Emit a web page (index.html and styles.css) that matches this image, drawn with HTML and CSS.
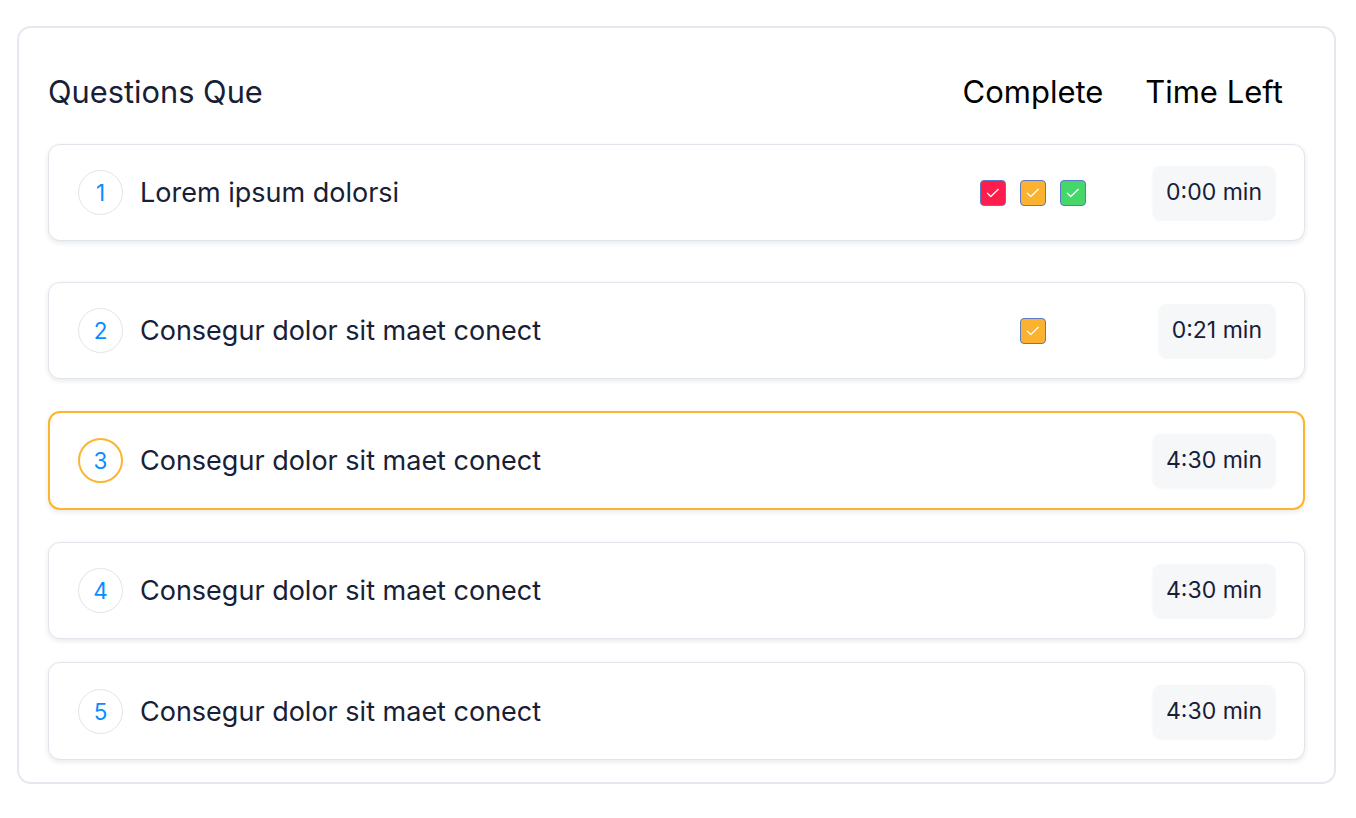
FILE: index.html
```html
<!DOCTYPE html>
<html lang="en">
<head>
<meta charset="utf-8">
<title>Questions Que</title>
<link rel="stylesheet" href="styles.css">
</head>
<body>
<div class="card">
  <div class="head">
    <div class="head-title">Questions Que</div>
    <div class="head-complete">Complete</div>
    <div class="head-time">Time Left</div>
  </div>
  <div class="list">
    <div class="row row-1">
      <div class="num">1</div>
      <div class="title">Lorem ipsum dolorsi</div>
      <div class="complete">
        <span class="chk red"><svg viewBox="0 0 26 26"><path d="M6.8 13.2l3.8 3.6 8.2-7.8"/></svg></span>
        <span class="chk orange"><svg viewBox="0 0 26 26"><path d="M6.8 13.2l3.8 3.6 8.2-7.8"/></svg></span>
        <span class="chk green"><svg viewBox="0 0 26 26"><path d="M6.8 13.2l3.8 3.6 8.2-7.8"/></svg></span>
      </div>
      <div class="time"><span class="badge">0:00 min</span></div>
    </div>
    <div class="row row-2">
      <div class="num">2</div>
      <div class="title">Consegur dolor sit maet conect</div>
      <div class="complete">
        <span class="chk orange"><svg viewBox="0 0 26 26"><path d="M6.8 13.2l3.8 3.6 8.2-7.8"/></svg></span>
      </div>
      <div class="time"><span class="badge">0:21 min</span></div>
    </div>
    <div class="row row-3 active">
      <div class="num">3</div>
      <div class="title">Consegur dolor sit maet conect</div>
      <div class="complete"></div>
      <div class="time"><span class="badge">4:30 min</span></div>
    </div>
    <div class="row row-4">
      <div class="num">4</div>
      <div class="title">Consegur dolor sit maet conect</div>
      <div class="complete"></div>
      <div class="time"><span class="badge">4:30 min</span></div>
    </div>
    <div class="row row-5">
      <div class="num">5</div>
      <div class="title">Consegur dolor sit maet conect</div>
      <div class="complete"></div>
      <div class="time"><span class="badge">4:30 min</span></div>
    </div>
  </div>
</div>
</body>
</html>
```

FILE: styles.css
```css
* { box-sizing: border-box; }
html, body { margin: 0; padding: 0; background: #ffffff; }
body {
  font-family: "Inter", "Noto Sans", sans-serif;
  color: #172036;
  padding: 26px 21px 0 17px;
}
.card {
  width: 1319px;
  height: 758px;
  border: 2px solid #e5e8ee;
  border-radius: 14px;
  padding: 0 29px 0 29px;
}
.head {
  display: flex;
  align-items: center;
  height: 116px;
  padding-top: 11px;
  padding-right: 11px;
}
.head-title {
  flex: 1;
  font-size: 30.8px;
  font-weight: 400;
  color: #172036;
}
.head-complete {
  width: 160px;
  text-align: center;
  font-size: 31px;
  font-weight: 400;
  color: #000;
}
.head-time {
  width: 160px;
  text-align: center;
  font-size: 31px;
  font-weight: 400;
  color: #000;
  margin-left: 21px;
}
.list { display: flex; flex-direction: column; }
.row {
  display: flex;
  align-items: center;
  height: 97px;
  border: 1.5px solid #e1e4ea;
  border-radius: 12px;
  padding: 0 29px 0 29px;
  box-shadow: 0 2px 5px rgba(30, 41, 59, 0.1);
  background: #fff;
}
.row-2 { margin-top: 41px; }
.row-3 { margin-top: 32px; height: 99px; }
.row-4 { margin-top: 32px; }
.row-5 { margin-top: 23px; height: 98px; }
.row.active { border: 2px solid #fbb52e; padding: 0 28px; }
.num {
  width: 45px;
  height: 45px;
  border-radius: 50%;
  border: 1.5px solid #e1e4ea;
  display: flex;
  align-items: center;
  justify-content: center;
  color: #0a8cff;
  font-size: 22.5px;
  flex: none;
}
.active .num { border: 2px solid #fbb52e; }
.title {
  flex: 1;
  margin-left: 17px;
  font-size: 27px;
  color: #172036;
  font-weight: 400;
}
.complete {
  width: 160px;
  display: flex;
  justify-content: center;
  gap: 14px;
}
.chk {
  width: 26px;
  height: 26px;
  border-radius: 4px;
  border: 1px solid #5b7bc9;
  display: block;
}
.chk svg { width: 24px; height: 24px; display: block; }
.chk path { fill: none; stroke: #fff; stroke-width: 1.3; stroke-linecap: round; stroke-linejoin: round; }
.chk.red { background: #ff1d4c; }
.chk.orange { background: #fbb230; }
.chk.green { background: #46d76b; }
.time {
  width: 162px;
  display: flex;
  justify-content: flex-end;
}
.badge {
  display: block;
  height: 53px;
  line-height: 53px;
  padding: 0 13px;
  background: #f6f7f9;
  border-radius: 8px;
  box-shadow: 0 1px 3px rgba(30, 41, 59, 0.07);
  font-size: 23px;
  font-weight: 400;
  color: #172036;
}
```
